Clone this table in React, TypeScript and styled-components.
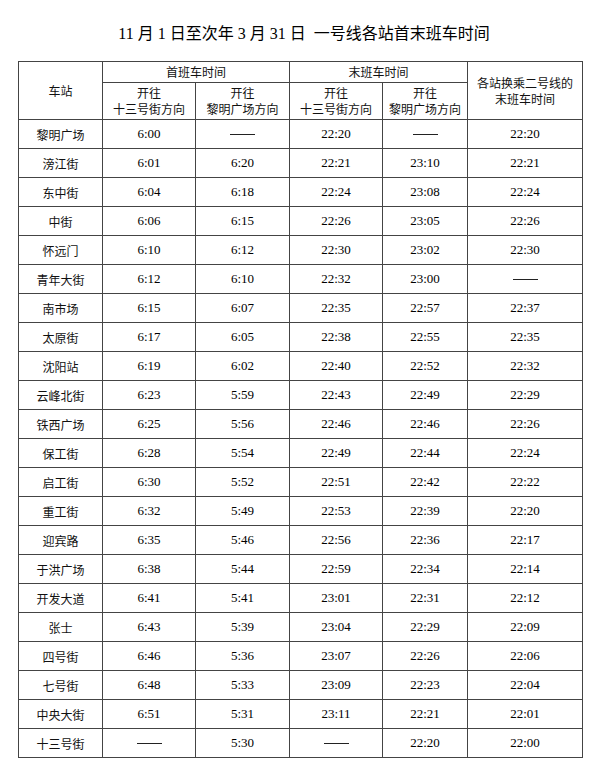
import styled, { createGlobalStyle } from 'styled-components';

const GlobalStyle = createGlobalStyle`
  body {
    margin: 0;
    background: #fff;
    color: #111;
    font-family: "Liberation Serif", "Noto Sans CJK SC", serif;
  }
`;

const Page = styled.div`
  width: 600px;
  padding-bottom: 12px;
`;

const Title = styled.h1`
  margin: 0;
  padding: 24px 0 17px 8px;
  height: 20px;
  line-height: 20px;
  text-align: center;
  font-size: 16px;
  font-weight: 400;
  font-family: "Liberation Serif", "Noto Sans CJK SC", serif;
  color: #000;
  white-space: pre;
`;

const Grid = styled.div`
  margin-left: 18px;
  width: 565px;
  box-sizing: border-box;
  display: grid;
  grid-template-columns: 83px 92px 93px 92px 84px 114px;
  grid-template-rows: 20px 36px repeat(22, 28px);
  gap: 1px;
  padding: 1px;
  background: #444;
`;

const Cell = styled.div<{ $col?: string; $row?: string }>`
  background: #fff;
  display: flex;
  align-items: center;
  justify-content: center;
  text-align: center;
  grid-column: ${(p) => p.$col || 'auto'};
  grid-row: ${(p) => p.$row || 'auto'};
`;

const HeadCell = styled(Cell)`
  font-family: "Noto Sans CJK SC", sans-serif;
  font-size: 12px;
  line-height: 16px;
  color: #111;
`;

const StationCell = styled(Cell)`
  font-family: "Noto Sans CJK SC", sans-serif;
  font-size: 12px;
  color: #111;
`;

const TimeCell = styled(Cell)`
  font-family: "Liberation Serif", serif;
  font-size: 13px;
  color: #000;
`;

const Dash = styled.span`
  display: inline-block;
  width: 25px;
  height: 0;
  border-top: 1px solid #222;
`;

const rows = [
  ['黎明广场', '6:00', '-', '22:20', '-', '22:20'],
  ['滂江街', '6:01', '6:20', '22:21', '23:10', '22:21'],
  ['东中街', '6:04', '6:18', '22:24', '23:08', '22:24'],
  ['中街', '6:06', '6:15', '22:26', '23:05', '22:26'],
  ['怀远门', '6:10', '6:12', '22:30', '23:02', '22:30'],
  ['青年大街', '6:12', '6:10', '22:32', '23:00', '-'],
  ['南市场', '6:15', '6:07', '22:35', '22:57', '22:37'],
  ['太原街', '6:17', '6:05', '22:38', '22:55', '22:35'],
  ['沈阳站', '6:19', '6:02', '22:40', '22:52', '22:32'],
  ['云峰北街', '6:23', '5:59', '22:43', '22:49', '22:29'],
  ['铁西广场', '6:25', '5:56', '22:46', '22:46', '22:26'],
  ['保工街', '6:28', '5:54', '22:49', '22:44', '22:24'],
  ['启工街', '6:30', '5:52', '22:51', '22:42', '22:22'],
  ['重工街', '6:32', '5:49', '22:53', '22:39', '22:20'],
  ['迎宾路', '6:35', '5:46', '22:56', '22:36', '22:17'],
  ['于洪广场', '6:38', '5:44', '22:59', '22:34', '22:14'],
  ['开发大道', '6:41', '5:41', '23:01', '22:31', '22:12'],
  ['张士', '6:43', '5:39', '23:04', '22:29', '22:09'],
  ['四号街', '6:46', '5:36', '23:07', '22:26', '22:06'],
  ['七号街', '6:48', '5:33', '23:09', '22:23', '22:04'],
  ['中央大街', '6:51', '5:31', '23:11', '22:21', '22:01'],
  ['十三号街', '-', '5:30', '-', '22:20', '22:00'],
];

export default function App() {
  return (
    <Page>
      <GlobalStyle />
      <Title>11 月 1 日至次年 3 月 31 日  一号线各站首末班车时间</Title>
      <Grid>
        <HeadCell $col="1" $row="1 / 3">车站</HeadCell>
        <HeadCell $col="2 / 4" $row="1">首班车时间</HeadCell>
        <HeadCell $col="4 / 6" $row="1">末班车时间</HeadCell>
        <HeadCell $col="6" $row="1 / 3">
          各站换乘二号线的
          <br />
          末班车时间
        </HeadCell>
        <HeadCell $col="2" $row="2">开往<br />十三号街方向</HeadCell>
        <HeadCell $col="3" $row="2">开往<br />黎明广场方向</HeadCell>
        <HeadCell $col="4" $row="2">开往<br />十三号街方向</HeadCell>
        <HeadCell $col="5" $row="2">开往<br />黎明广场方向</HeadCell>
        {rows.map(([name, ...times]) => [
          <StationCell key={name}>{name}</StationCell>,
          ...times.map((t, i) => (
            <TimeCell key={name + i}>{t === '-' ? <Dash /> : t}</TimeCell>
          )),
        ])}
      </Grid>
    </Page>
  );
}
